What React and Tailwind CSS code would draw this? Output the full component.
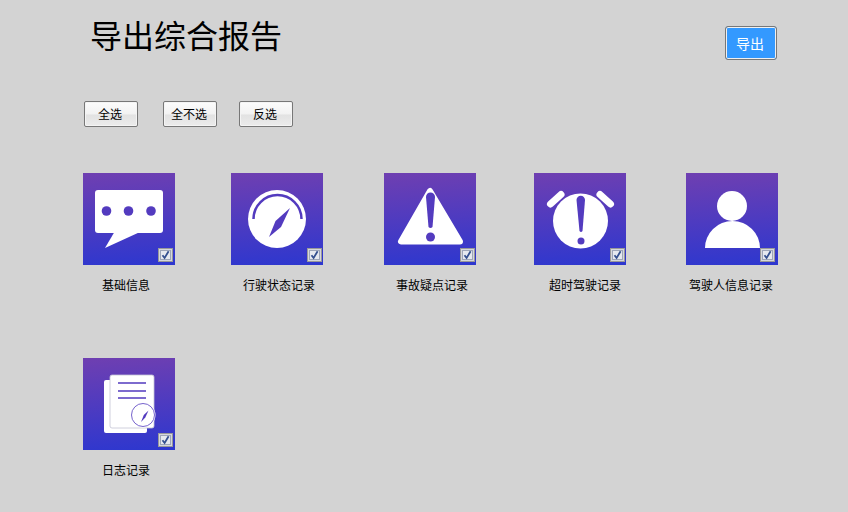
const font = { fontFamily: '"Noto Sans CJK SC", "Liberation Sans", sans-serif' };

function Check({ className }) {
  return (
    <span className={`absolute top-[75px] flex h-[14px] w-[15px] items-center justify-center border border-[#999] bg-[#d5d7dc] ${className}`}>
      <svg width="11" height="10" viewBox="0 0 11 10">
        <rect x="0.5" y="0.5" width="10" height="9" fill="#e6e9ef" stroke="#9ea6b8" />
        <path d="M2.5 5.2 L4.6 8 L8.6 1.2" fill="none" stroke="#34508f" strokeWidth="1.8" />
      </svg>
    </span>
  );
}

function Tile({ label, labelPad, checkPos, className, children }) {
  return (
    <div className={`w-[92px] shrink-0 ${className}`}>
      <div className="relative h-[92px] w-[92px] bg-[linear-gradient(176deg,#6f3fb1,#2d37cf)]">
        <svg width="92" height="92" viewBox="0 0 92 92" className="block">{children}</svg>
        <Check className={checkPos} />
      </div>
      <div className={`mt-[11px] h-[18px] whitespace-nowrap text-xs leading-[18px] text-black ${labelPad}`}>{label}</div>
    </div>
  );
}

function SelectButton({ children, className }) {
  return (
    <button type="button" className={`h-[26px] w-[54px] rounded-[2px] border border-[#777] bg-[linear-gradient(#fcfcfc_0%,#f2f2f2_50%,#e2e2e2_54%,#ebebeb_100%)] pr-[2px] text-xs text-black shadow-[inset_0_0_0_1px_#f4f4f4] ${className}`}>
      {children}
    </button>
  );
}

const purple = '#533bbf';

export default function App() {
  return (
    <div className="h-[512px] w-[848px] overflow-hidden bg-[#d3d3d3]" style={font}>
      <div className="flex items-start justify-between pl-[90px] pr-[71px]">
        <h1 className="mt-[11px] text-[32px] font-normal leading-[46px] text-black">导出综合报告</h1>
        <button type="button" className="mt-[26px] h-[34px] w-[52px] rounded-[3px] border border-[#777] bg-[#3399ff] pr-[2px] text-sm text-white shadow-[inset_0_0_0_1px_#f0f0f0]">
          导出
        </button>
      </div>

      <div className="mt-[41px] flex pl-[84px]">
        <SelectButton>全选</SelectButton>
        <SelectButton className="ml-[25px]">全不选</SelectButton>
        <SelectButton className="ml-[22px]">反选</SelectButton>
      </div>

      <div className="mt-[46px] flex pl-[83px]">
        <Tile label="基础信息" labelPad="pl-[19px]" checkPos="right-[2px]">
          <rect x="12" y="17" width="68" height="43" rx="3" fill="#fff" />
          <path d="M32 58 L22 75 L57 59 Z" fill="#fff" />
          <circle cx="23.500" cy="38" r="4.800" fill={purple} />
          <circle cx="45.500" cy="38" r="4.800" fill={purple} />
          <circle cx="68" cy="38" r="4.800" fill={purple} />
        </Tile>

        <Tile label="行驶状态记录" labelPad="pl-[12px]" checkPos="right-[1px]" className="ml-[56px]">
          <circle cx="46" cy="46" r="29" fill="#fff" />
          <path d="M22.500 46 A24 24 0 0 1 70.500 46" fill="none" stroke={purple} strokeWidth="2.5" />
          <path d="M38 64 L44.500 48 L59 35 L50 54 Z" fill={purple} />
        </Tile>

        <Tile label="事故疑点记录" labelPad="pl-[12px]" checkPos="right-[1px]" className="ml-[61px]">
          <path d="M46 18 L17 68.500 H76 Z" fill="#fff" stroke="#fff" strokeWidth="6" strokeLinejoin="round" />
          <path d="M42 24 A4.500 4.500 0 0 1 51 24 L48.500 54 Q46.500 56 44.500 54 Z" fill={purple} />
          <circle cx="46.500" cy="64" r="4.500" fill={purple} />
        </Tile>

        <Tile label="超时驾驶记录" labelPad="pl-[15px]" checkPos="right-[1px]" className="ml-[58px]">
          <circle cx="46.500" cy="48" r="27.500" fill="#fff" />
          <path d="M16.500 31 L27 21.500 M66 21.500 L76.500 31" stroke="#fff" strokeWidth="7" strokeLinecap="round" />
          <path d="M42.500 27 A4.200 4.200 0 0 1 51 27 L48.500 58 Q47 60 45.500 58 Z" fill={purple} />
          <circle cx="47" cy="68" r="3.500" fill={purple} />
        </Tile>

        <Tile label="驾驶人信息记录" labelPad="pl-[3px]" checkPos="right-[3px]" className="ml-[60px]">
          <circle cx="46" cy="33" r="15" fill="#fff" />
          <path d="M19 75 A27.500 27 0 0 1 74 75 Z" fill="#fff" />
        </Tile>
      </div>

      <div className="mt-[64px] flex pl-[83px]">
        <Tile label="日志记录" labelPad="pl-[19px]" checkPos="right-[2px]">
          <rect x="21" y="22" width="43" height="53" rx="2" fill="#fff" />
          <rect x="27" y="17" width="44" height="53" rx="2" fill="#fff" stroke="#c4c4d4" strokeWidth="0.8" />
          <path d="M35 25 H63 M35 33 H63 M35 40 H63" stroke={purple} strokeWidth="1.400" />
          <circle cx="60" cy="57" r="12.500" fill="#fff" />
          <circle cx="60" cy="57" r="11.500" fill="#fff" stroke={purple} strokeWidth="0.8" />
          <path d="M58 64 L60.800 57 L65.500 52.500 L62.300 59.500 Z" fill={purple} />
        </Tile>
      </div>
    </div>
  );
}
